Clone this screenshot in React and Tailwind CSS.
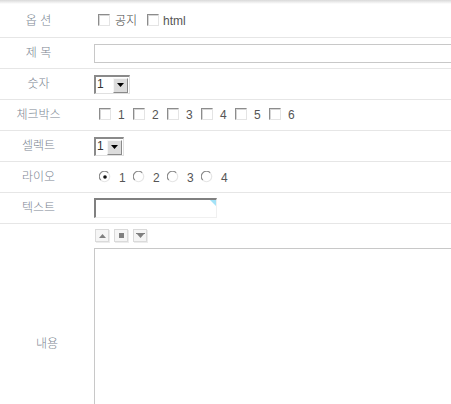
import React from 'react';

const font = { fontFamily: '"Liberation Sans", "Noto Sans CJK KR", sans-serif' };

const Check = () => (
  <span className="inline-block w-[12px] h-[12px] bg-white border border-t-[#8c8c8c] border-l-[#8c8c8c] border-r-[#e4e4e4] border-b-[#e4e4e4] shadow-[inset_1px_1px_0_#d6d6d6]" />
);

const Radio = ({ on }) => (
  <svg width="12" height="12" viewBox="0 0 12 12" className="block">
    <circle cx="6" cy="6" r="5" fill="#fff" />
    <path d="M1.8 9.2 A5 5 0 0 1 9.2 1.8" stroke="#8a8a8a" strokeWidth="1.2" fill="none" />
    <path d="M9.2 1.8 A5 5 0 0 1 1.8 9.2" stroke="#e6e6e6" strokeWidth="1.2" fill="none" />
    {on && <circle cx="6" cy="6" r="1.8" fill="#111" />}
  </svg>
);

const Select = ({ w }) => (
  <div className={`flex h-[19px] ${w} border-t-2 border-l-2 border-t-[#8a8a8a] border-l-[#8a8a8a] border-r border-b border-r-[#e0e0e0] border-b-[#e0e0e0] bg-white`}>
    <span className="flex-1 text-[12px] leading-[15px] pl-[1px] text-[#333]">1</span>
    <span className="w-[15px] h-[15px] mt-[1px] mr-[1px] bg-[#dcdcdc] border border-t-[#f6f6f6] border-l-[#f6f6f6] border-r-[#8a8a8a] border-b-[#8a8a8a] flex items-center justify-center">
      <svg width="7" height="4" viewBox="0 0 7 4"><path d="M0 0h7L3.5 4z" fill="#000" /></svg>
    </span>
  </div>
);

const Row = ({ label, h = 'h-[31px]', children }) => (
  <div className={`flex ${h} border-b border-[#e6e6e6]`}>
    <div className="w-[94px] shrink-0 pr-[17px] flex items-center justify-center text-[12px] font-light text-[#7d8692]">{label}</div>
    <div className="flex-1 min-w-0 flex items-center">{children}</div>
  </div>
);

const EdBtn = ({ children }) => (
  <span className="w-[14px] h-[13px] bg-[#f5f5f5] border border-[#dadada] shadow-[1px_1px_0_#ececec] flex items-center justify-center">
    {children}
  </span>
);

export default function App() {
  return (
    <div className="w-[451px] h-[404px] overflow-hidden bg-white" style={font}>
      <div className="h-[4px] bg-linear-to-b from-[#d9d9d9] to-white" />
      <Row label="옵 션" h="h-[34px]">
        <span className="ml-[4px] mt-[1px]"><Check /></span>
        <span className="ml-[5px] text-[12px] font-light text-[#444]">공지</span>
        <span className="ml-[10px] mt-[1px]"><Check /></span>
        <span className="ml-[4px] text-[12px] text-[#555]">html</span>
      </Row>
      <Row label="제 목">
        <div className="w-[400px] shrink-0 h-[19px] border border-[#c8c8c8] bg-white" />
      </Row>
      <Row label="숫자">
        <Select w="w-[36px]" />
      </Row>
      <Row label="체크박스">
        {[1, 2, 3, 4, 5, 6].map((n) => (
          <span key={n} className="w-[34px] flex items-center">
            <span className="ml-[5px]"><Check /></span>
            <span className="ml-[7px] text-[12px] text-[#555]">{n}</span>
          </span>
        ))}
      </Row>
      <Row label="셀렉트">
        <Select w="w-[30px]" />
      </Row>
      <Row label="라이오">
        {[1, 2, 3, 4].map((n) => (
          <span key={n} className="w-[34px] flex items-center">
            <span className="ml-[5px]"><Radio on={n === 1} /></span>
            <span className="ml-[8px] text-[12px] text-[#555] mt-[2px]">{n}</span>
          </span>
        ))}
      </Row>
      <Row label="텍스트">
        <div className="relative w-[123px] h-[20px] bg-white border-t-2 border-l-2 border-t-[#808080] border-l-[#808080] border-r border-b border-r-[#f0f0f0] border-b-[#f0f0f0]">
          <span className="absolute top-0 right-0 w-0 h-0 border-t-[6px] border-l-[6px] border-t-[#a3e2f7] border-l-transparent" />
        </div>
      </Row>
      <div className="flex">
        <div className="w-[94px] shrink-0 flex items-center justify-center text-[12px] font-light text-[#7d8692]">내용</div>
        <div className="flex-1 min-w-0 pt-[5px] pb-[10px]">
          <div className="flex gap-[5px] pl-[1px]">
            <EdBtn>
              <svg width="7" height="4" viewBox="0 0 7 4"><path d="M3.5 0L7 4H0z" fill="#808080" /></svg>
            </EdBtn>
            <EdBtn>
              <span className="w-[5px] h-[5px] bg-[#808080]" />
            </EdBtn>
            <EdBtn>
              <svg width="9" height="5" viewBox="0 0 9 5"><path d="M0 0h9v1H0zM1 1h7L4.5 5z" fill="#808080" /></svg>
            </EdBtn>
          </div>
          <div className="mt-[6px] w-[400px] h-[205px] border border-[#c8c8c8] bg-white" />
        </div>
      </div>
    </div>
  );
}
